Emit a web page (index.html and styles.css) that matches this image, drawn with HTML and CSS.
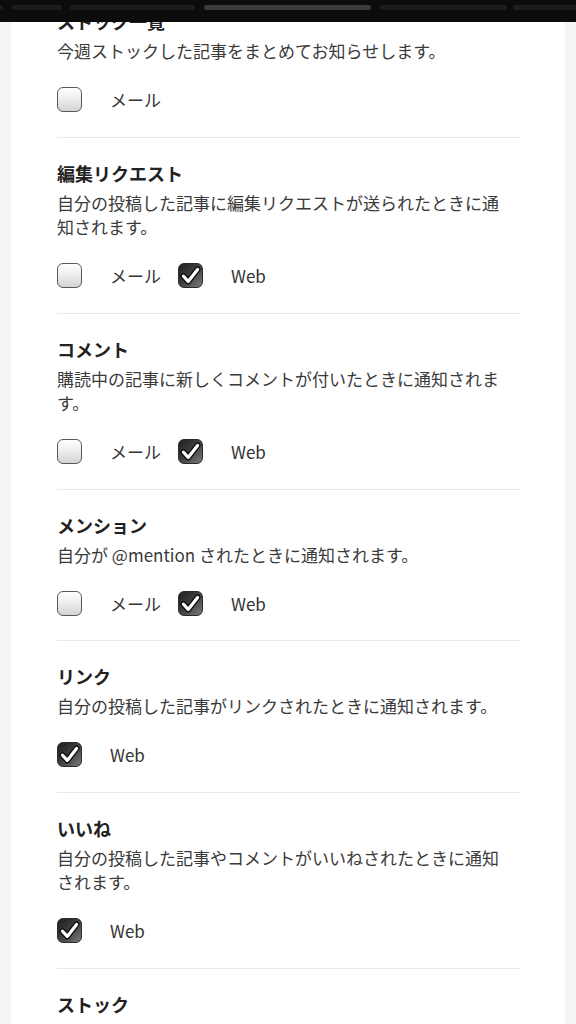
FILE: index.html
```html
<!DOCTYPE html>
<html lang="ja">
<head>
<meta charset="utf-8">
<title>通知設定</title>
<link rel="stylesheet" href="styles.css">
</head>
<body>
<div class="tabbar">
  <span class="seg seg-a"></span>
  <span class="seg seg-b"></span>
  <span class="seg seg-c"></span>
  <span class="seg seg-active"></span>
  <span class="seg seg-d"></span>
  <span class="seg seg-e"></span>
</div>
<main class="card">
  <section class="item item-first">
    <h2 class="title">ストック一覧</h2>
    <p class="desc">今週ストックした記事をまとめてお知らせします。</p>
    <div class="opts">
      <label class="opt"><span class="box"></span><span class="lbl">メール</span></label>
    </div>
  </section>
  <section class="item">
    <h2 class="title">編集リクエスト</h2>
    <p class="desc">自分の投稿した記事に編集リクエストが送られたときに通知されます。</p>
    <div class="opts">
      <label class="opt"><span class="box"></span><span class="lbl">メール</span></label>
      <label class="opt"><span class="box checked"><svg viewBox="0 0 25 25"><path class="ck-o" d="M5.5 13.2 L10.2 18.4 L19.6 6.4"/><path class="ck-i" d="M5.5 13.2 L10.2 18.4 L19.6 6.4"/></svg></span><span class="lbl">Web</span></label>
    </div>
  </section>
  <section class="item">
    <h2 class="title">コメント</h2>
    <p class="desc">購読中の記事に新しくコメントが付いたときに通知されます。</p>
    <div class="opts">
      <label class="opt"><span class="box"></span><span class="lbl">メール</span></label>
      <label class="opt"><span class="box checked"><svg viewBox="0 0 25 25"><path class="ck-o" d="M5.5 13.2 L10.2 18.4 L19.6 6.4"/><path class="ck-i" d="M5.5 13.2 L10.2 18.4 L19.6 6.4"/></svg></span><span class="lbl">Web</span></label>
    </div>
  </section>
  <section class="item item-short">
    <h2 class="title">メンション</h2>
    <p class="desc">自分が @mention されたときに通知されます。</p>
    <div class="opts">
      <label class="opt"><span class="box"></span><span class="lbl">メール</span></label>
      <label class="opt"><span class="box checked"><svg viewBox="0 0 25 25"><path class="ck-o" d="M5.5 13.2 L10.2 18.4 L19.6 6.4"/><path class="ck-i" d="M5.5 13.2 L10.2 18.4 L19.6 6.4"/></svg></span><span class="lbl">Web</span></label>
    </div>
  </section>
  <section class="item">
    <h2 class="title">リンク</h2>
    <p class="desc">自分の投稿した記事がリンクされたときに通知されます。</p>
    <div class="opts">
      <label class="opt"><span class="box checked"><svg viewBox="0 0 25 25"><path class="ck-o" d="M5.5 13.2 L10.2 18.4 L19.6 6.4"/><path class="ck-i" d="M5.5 13.2 L10.2 18.4 L19.6 6.4"/></svg></span><span class="lbl">Web</span></label>
    </div>
  </section>
  <section class="item">
    <h2 class="title">いいね</h2>
    <p class="desc">自分の投稿した記事やコメントがいいねされたときに通知されます。</p>
    <div class="opts">
      <label class="opt"><span class="box checked"><svg viewBox="0 0 25 25"><path class="ck-o" d="M5.5 13.2 L10.2 18.4 L19.6 6.4"/><path class="ck-i" d="M5.5 13.2 L10.2 18.4 L19.6 6.4"/></svg></span><span class="lbl">Web</span></label>
    </div>
  </section>
  <section class="item">
    <h2 class="title">ストック</h2>
  </section>
</main>
</body>
</html>
```
FILE: styles.css
```css
html, body {
  margin: 0;
  padding: 0;
  background: #f5f4f2;
  font-family: "Noto Sans CJK JP", "Noto Sans", sans-serif;
  height: 1024px;
  overflow: hidden;
}

.tabbar {
  position: fixed;
  top: 0;
  left: 0;
  right: 0;
  height: 22px;
  background: #0c0c0c;
  z-index: 10;
  display: flex;
  align-items: flex-start;
  padding-top: 5px;
  box-sizing: border-box;
  overflow: hidden;
}

.seg {
  display: block;
  flex: none;
  height: 5px;
  border-radius: 3px;
  background: #1d1d1d;
}
.seg-a { width: 3px; margin-right: 9px; }
.seg-b { width: 50px; margin-right: 8px; }
.seg-c { width: 125px; margin-right: 9px; }
.seg-active { width: 167px; margin-right: 9px; background: #3b3b3b; }
.seg-d { width: 127px; margin-right: 6px; }
.seg-e { width: 80px; }

.card {
  margin: 0 11px;
  background: #ffffff;
  padding: 0 45px 0 46px;
  min-height: 1024px;
}

.item {
  border-top: 1px solid #e8e8e8;
  padding: 23px 0 25px;
}

.item-first {
  border-top: none;
  padding-top: 9px;
}

.item-short {
  padding-bottom: 24px;
}

.title {
  margin: 0;
  font-size: 18px;
  line-height: 24px;
  font-weight: 700;
  color: #222;
}

.desc {
  margin: 6px 0 0;
  width: 452px;
  font-size: 17px;
  line-height: 24px;
  color: #3a3a3a;
}

.opts {
  display: flex;
  align-items: center;
  margin-top: 24px;
  height: 25px;
  gap: 17px;
}

.opt {
  display: flex;
  align-items: center;
}

.box {
  box-sizing: border-box;
  width: 25px;
  height: 25px;
  border: 1.5px solid #5a5a5a;
  border-radius: 6px;
  background: linear-gradient(to bottom, #ffffff 0%, #f0f0f0 40%, #d4d4d4 100%);
  display: block;
  position: relative;
}

.box.checked {
  border-color: #2a2a2a;
  background: linear-gradient(135deg, #1e1e1e 0%, #3c3c3c 45%, #7a7a7a 100%);
}

.box svg {
  position: absolute;
  left: -1.5px;
  top: -1.5px;
  width: 25px;
  height: 25px;
}

.ck-o {
  fill: none;
  stroke: #111;
  stroke-width: 6;
  stroke-linecap: round;
  stroke-linejoin: round;
}

.ck-i {
  fill: none;
  stroke: #ffffff;
  stroke-width: 3.2;
  stroke-linecap: round;
  stroke-linejoin: round;
}

.lbl {
  margin-left: 28px;
  font-size: 17px;
  line-height: 24px;
  color: #333;
}
```
